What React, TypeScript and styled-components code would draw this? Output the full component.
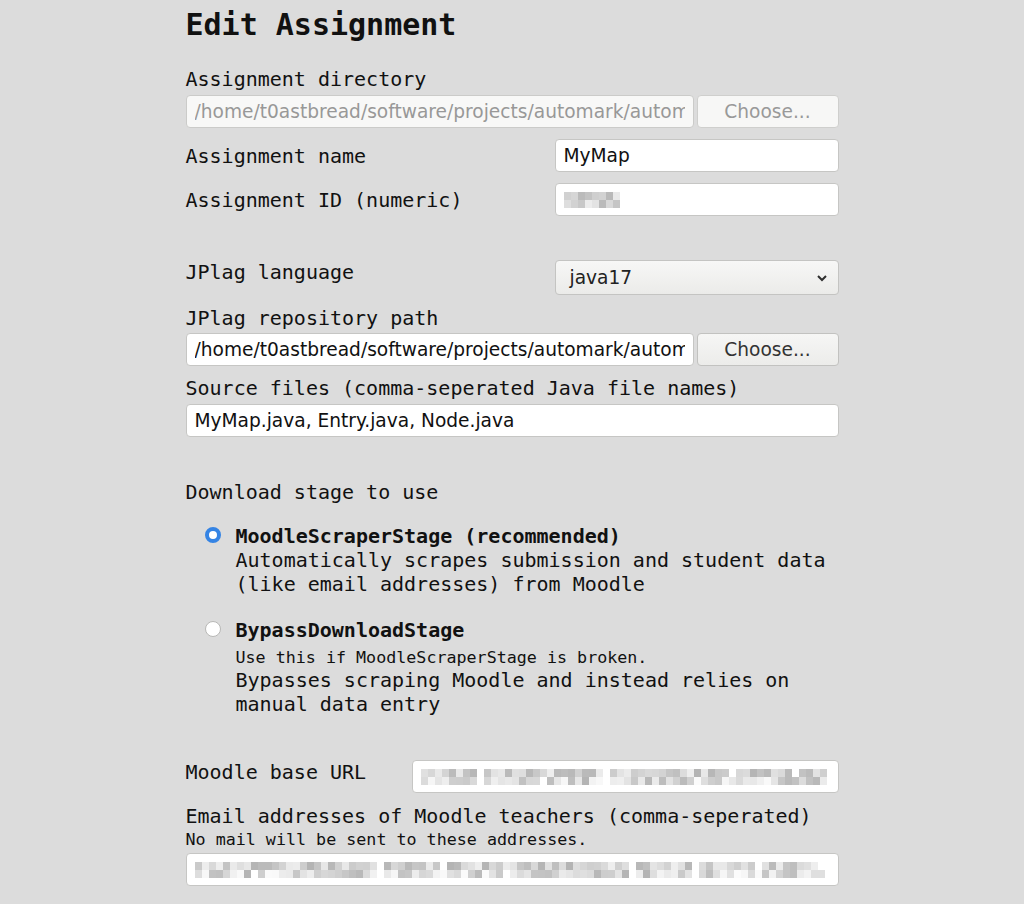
import React from "react";
import styled, { createGlobalStyle } from "styled-components";

const Global = createGlobalStyle`
  html, body { margin: 0; padding: 0; background: #dcdcdc; }
  body { font-family: "DejaVu Sans Mono", monospace; color: #111; }
`;

const Page = styled.div`
  width: 653px;
  margin: 0 auto;
  display: flex;
  flex-direction: column;
`;

const Title = styled.h1`
  margin: 0;
  font-family: "DejaVu Sans Mono", monospace;
  font-weight: bold;
  font-size: 30px;
  line-height: 50px;
  height: 47px;
`;

const Label = styled.div<{ $mt?: number }>`
  font-size: 20px;
  line-height: 24px;
  margin-top: ${(p) => p.$mt ?? 0}px;
  white-space: nowrap;
`;

const Small = styled.div<{ $mt?: number }>`
  font-size: 16.7px;
  line-height: 22px;
  margin-top: ${(p) => p.$mt ?? 0}px;
  white-space: nowrap;
`;

const Row = styled.div<{ $mt?: number; $align?: string }>`
  display: flex;
  align-items: ${(p) => p.$align ?? "center"};
  margin-top: ${(p) => p.$mt ?? 0}px;
`;

const RowLabel = styled(Label)`
  flex: 1;
`;

const Input = styled.div<{ $w?: number; $disabled?: boolean }>`
  box-sizing: border-box;
  height: 33px;
  min-width: 0;
  ${(p) => (p.$w ? `width: ${p.$w}px; flex: none;` : "flex: 1;")}
  background: ${(p) => (p.$disabled ? "#f8f8f7" : "#ffffff")};
  border: 1px solid ${(p) => (p.$disabled ? "#cbcbc9" : "#c6c6c4")};
  border-radius: 4px;
  padding: 0 8px;
  display: flex;
  align-items: center;
  overflow: hidden;
  font-family: "DejaVu Sans", sans-serif;
  font-size: 18.6px;
  color: ${(p) => (p.$disabled ? "#989898" : "#111")};
  white-space: nowrap;
`;

const InputText = styled.span`
  display: block;
  overflow: hidden;
  white-space: nowrap;
  text-overflow: clip;
  min-width: 0;
`;

const Button = styled.div<{ $disabled?: boolean }>`
  box-sizing: border-box;
  width: 142px;
  flex: none;
  height: 33px;
  margin-left: 3px;
  border: 1px solid ${(p) => (p.$disabled ? "#cfcfcd" : "#c2c2c0")};
  border-radius: 4px;
  background: ${(p) =>
    p.$disabled ? "#f7f7f6" : "linear-gradient(#f6f6f5, #ececea)"};
  display: flex;
  align-items: center;
  justify-content: center;
  font-family: "DejaVu Sans", sans-serif;
  font-size: 18.6px;
  color: ${(p) => (p.$disabled ? "#999" : "#333")};
`;

const Select = styled.div`
  box-sizing: border-box;
  width: 284px;
  height: 35px;
  border: 1px solid #c4c4c2;
  border-radius: 4px;
  background: linear-gradient(#f7f7f6, #ebebe9);
  display: flex;
  align-items: center;
  justify-content: space-between;
  padding: 0 10px 0 14px;
  font-family: "DejaVu Sans", sans-serif;
  font-size: 18.6px;
  color: #222;
`;

const RadioList = styled.div`
  display: flex;
  flex-direction: column;
  padding-left: 19px;
  margin-top: 20px;
  gap: 22px;
`;

const Option = styled.div`
  display: flex;
  align-items: flex-start;
  gap: 15px;
`;

const Radio = styled.div<{ $checked?: boolean }>`
  box-sizing: border-box;
  width: 16px;
  height: 16px;
  margin-top: 3px;
  border-radius: 50%;
  flex: none;
  ${(p) =>
    p.$checked
      ? `background: #ffffff; border: 4px solid #3584e4;`
      : `background: #ffffff; border: 1px solid #b8b8b6;`}
`;

const OptionBody = styled.div`
  display: flex;
  flex-direction: column;
`;

const OptionTitle = styled(Label)`
  font-weight: bold;
`;

const Mosaic = styled.div<{ $w?: number }>`
  display: flex;
  flex-direction: column;
  width: ${(p) => (p.$w ? `${p.$w}px` : "100%")};
`;

const MosaicRow = styled.div`
  display: flex;
  height: 8px;
`;

const Cell = styled.span`
  width: 7px;
  height: 8px;
  flex: none;
`;

function rand(seed: number) {
  let s = seed;
  return () => {
    s = (s * 9301 + 49297) % 233280;
    return s / 233280;
  };
}

function Redacted({ cols, seed, w }: { cols: number; seed: number; w?: number }) {
  const r = rand(seed);
  const rows = [0, 1].map((ri) =>
    Array.from({ length: cols }, (_, i) => {
      const gap = i % 9 === 8 && r() > 0.4;
      const v = gap ? 255 : Math.round(180 + r() * (ri === 0 ? 60 : 72));
      return `rgb(${v},${v},${v})`;
    })
  );
  return (
    <Mosaic $w={w}>
      {rows.map((row, ri) => (
        <MosaicRow key={ri}>
          {row.map((c, i) => (
            <Cell key={i} style={{ background: c }} />
          ))}
        </MosaicRow>
      ))}
    </Mosaic>
  );
}

const Chevron = () => (
  <svg width="12" height="8" viewBox="0 0 12 8">
    <path d="M2 2 L6 6 L10 2" fill="none" stroke="#2e2e2e" strokeWidth="2" />
  </svg>
);

export default function App() {
  const dir = "/home/t0astbread/software/projects/automark/automark-example";
  return (
    <>
      <Global />
      <Page>
        <Title>Edit Assignment</Title>

        <Label $mt={20}>Assignment directory</Label>
        <Row $mt={4}>
          <Input $disabled>
            <InputText>{dir}</InputText>
          </Input>
          <Button $disabled>Choose...</Button>
        </Row>

        <Row $mt={11}>
          <RowLabel>Assignment name</RowLabel>
          <Input $w={284}>MyMap</Input>
        </Row>
        <Row $mt={11}>
          <RowLabel>Assignment ID (numeric)</RowLabel>
          <Input $w={284}>
            <Redacted cols={8} seed={7} w={56} />
          </Input>
        </Row>

        <Row $mt={44} $align="flex-start">
          <RowLabel>JPlag language</RowLabel>
          <Select>
            <span>java17</span>
            <Chevron />
          </Select>
        </Row>

        <Label $mt={11}>JPlag repository path</Label>
        <Row $mt={3}>
          <Input>
            <InputText>{dir}</InputText>
          </Input>
          <Button>Choose...</Button>
        </Row>

        <Label $mt={10}>Source files (comma-seperated Java file names)</Label>
        <Row $mt={4}>
          <Input>MyMap.java, Entry.java, Node.java</Input>
        </Row>

        <Label $mt={43}>Download stage to use</Label>
        <RadioList>
          <Option>
            <Radio $checked />
            <OptionBody>
              <OptionTitle>MoodleScraperStage (recommended)</OptionTitle>
              <Label>Automatically scrapes submission and student data</Label>
              <Label>(like email addresses) from Moodle</Label>
            </OptionBody>
          </Option>
          <Option>
            <Radio />
            <OptionBody>
              <OptionTitle>BypassDownloadStage</OptionTitle>
              <Small $mt={4}>Use this if MoodleScraperStage is broken.</Small>
              <Label>Bypasses scraping Moodle and instead relies on</Label>
              <Label>manual data entry</Label>
            </OptionBody>
          </Option>
        </RadioList>

        <Row $mt={44} $align="flex-start">
          <RowLabel>Moodle base URL</RowLabel>
          <Input $w={427}>
            <Redacted cols={58} seed={13} />
          </Input>
        </Row>

        <Label $mt={11}>Email addresses of Moodle teachers (comma-seperated)</Label>
        <Small>No mail will be sent to these addresses.</Small>
        <Row $mt={3}>
          <Input>
            <Redacted cols={90} seed={29} />
          </Input>
        </Row>
      </Page>
    </>
  );
}
